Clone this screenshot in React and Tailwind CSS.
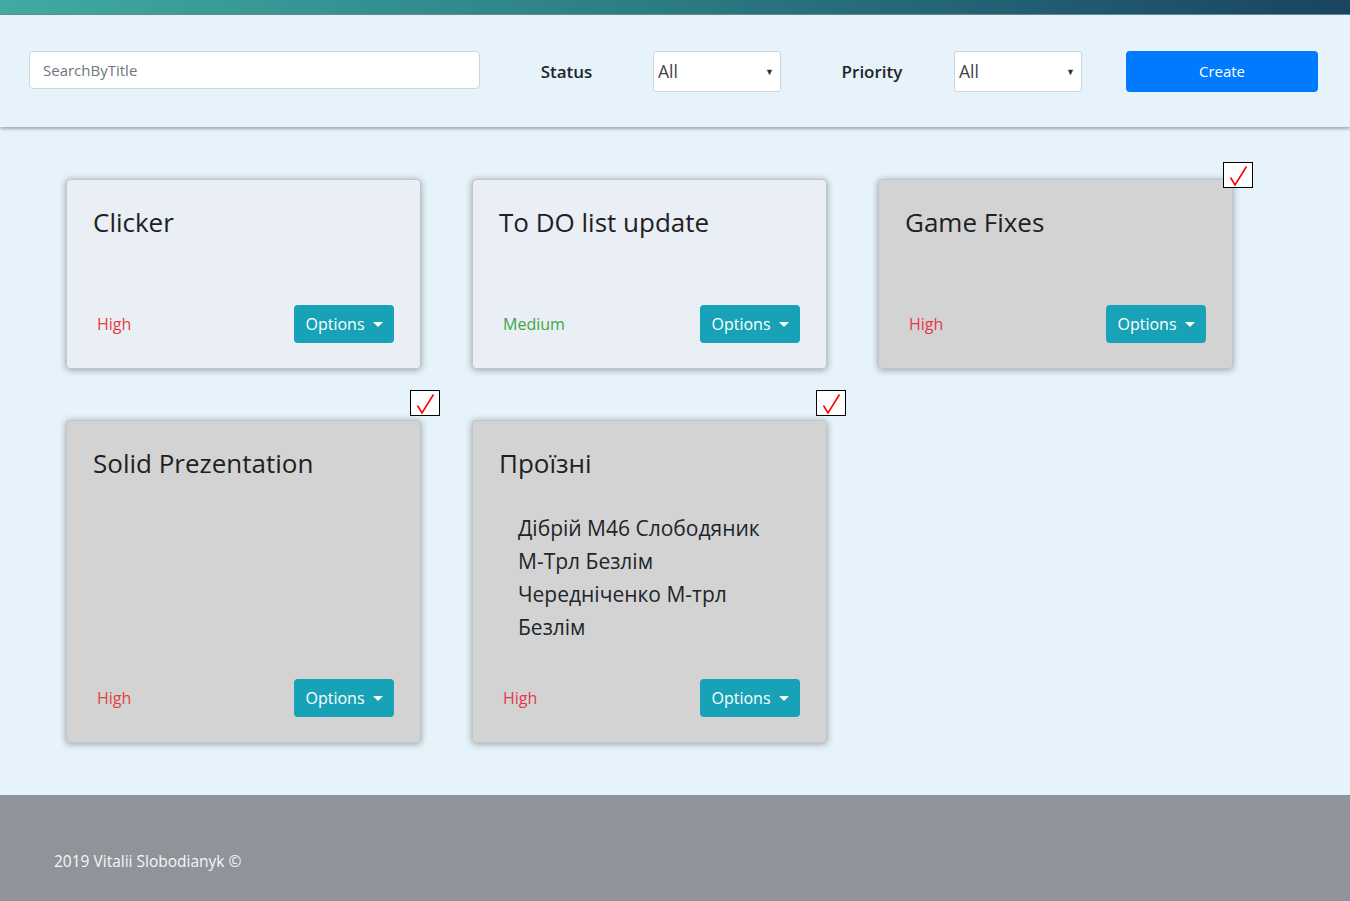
import React from "react";

const font = { fontFamily: '"Open Sans", "Noto Sans", sans-serif' };

function Check({ cls }) {
  return (
    <div className={`absolute w-[30px] h-[26px] bg-white border border-black ${cls}`}>
      <svg width="28" height="24" viewBox="0 0 28 24" className="block">
        <path d="M6.5 14.5 L11 22 L22.5 3.5" fill="none" stroke="#ff0000" strokeWidth="1.6" strokeLinejoin="miter" strokeLinecap="butt" />
      </svg>
    </div>
  );
}

function SelectBox() {
  return (
    <div className="w-[128px] h-[41px] bg-white border border-[#ced4da] rounded-[3px] flex items-center justify-between pl-[4px] pr-[6px]">
      <span className="text-[17.5px] text-[#444]">All</span>
      <span className="text-[9px] text-[#333]">▼</span>
    </div>
  );
}

function Card({ title, priority, prColor, done, checkCls, lines }) {
  return (
    <div
      className={`relative rounded-[4px] border border-[#c2c5c9] shadow-[0_1px_7px_rgba(0,0,0,0.35)] min-h-[190px] flex flex-col px-[26px] pt-[25px] pb-[25px] ${
        done ? "bg-[#d3d3d3]" : "bg-[#eaeef5]"
      }`}
    >
      {done && <Check cls={checkCls} />}
      <div className="text-[26px] leading-[34px] font-medium text-[#1e2124]">{title}</div>
      {lines && (
        <div className="mt-[32px] pl-[19px] text-[21px] leading-[33px] text-[#212529]">
          {lines.map((l) => (
            <div key={l}>{l}</div>
          ))}
        </div>
      )}
      <div className={`mt-auto flex items-center justify-between ${lines ? "pt-[35px]" : ""}`}>
        <span className={`pl-[4px] text-[16px] ${prColor}`}>{priority}</span>
        <button className="w-[100px] h-[38px] bg-[#17a2b8] rounded-[4px] text-white text-[16px] flex items-center justify-center gap-[8px]">
          Options
          <span className="w-0 h-0 border-l-[5px] border-r-[5px] border-t-[5px] border-l-transparent border-r-transparent border-t-white"></span>
        </button>
      </div>
    </div>
  );
}

export default function App() {
  return (
    <div style={font} className="w-[1350px] bg-[#e6f3fa]">
      <div className="h-[15px] bg-gradient-to-r from-[#40aba0] via-[#2b7b82] to-[#1a4462] border-b border-[#6b8a8e]"></div>
      <div className="h-[112px] bg-[#e6f3fa] shadow-[0_2px_3px_rgba(0,0,0,0.3)] relative flex items-start pt-[36px] pl-[29px]">
        <div className="w-[451px] h-[38px] bg-white border border-[#ced4da] rounded-[4px] flex items-center pl-[13px] text-[15px] text-[#6c757d]">
          SearchByTitle
        </div>
        <div className="w-[173px] h-[41px] flex items-center justify-center text-[17px] font-semibold text-[#212529]">
          Status
        </div>
        <SelectBox />
        <div className="w-[173px] h-[41px] flex items-center justify-center pl-[9px] text-[17px] font-semibold text-[#212529]">
          Priority
        </div>
        <SelectBox />
        <button className="ml-[44px] w-[192px] h-[41px] bg-[#007bff] rounded-[4px] text-white text-[15px]">
          Create
        </button>
      </div>
      <div className="grid grid-cols-[355px_355px_355px] gap-x-[51px] gap-y-[51px] pl-[66px] pt-[52px] pb-[52px]">
        <Card title="Clicker" priority="High" prColor="text-[#e0413f]" />
        <Card title="To DO list update" priority="Medium" prColor="text-[#3ca845]" />
        <Card title="Game Fixes" priority="High" prColor="text-[#e5364f]" done checkCls="-top-[18px] -right-[21px]" />
        <Card title="Solid Prezentation" priority="High" prColor="text-[#e0413f]" done checkCls="-top-[31px] -right-[20px]" />
        <Card
          title="Проїзні"
          priority="High"
          prColor="text-[#e5364f]"
          done
          checkCls="-top-[31px] -right-[20px]"
          lines={["Дібрій М46 Слободяник", "М-Трл Безлім", "Чередніченко М-трл", "Безлім"]}
        />
      </div>
      <div className="h-[106px] bg-[#909399] pl-[54px] pt-[55px] text-[15.5px] text-[#f5f7fa]">
        2019 Vitalii Slobodianyk ©
      </div>
    </div>
  );
}
